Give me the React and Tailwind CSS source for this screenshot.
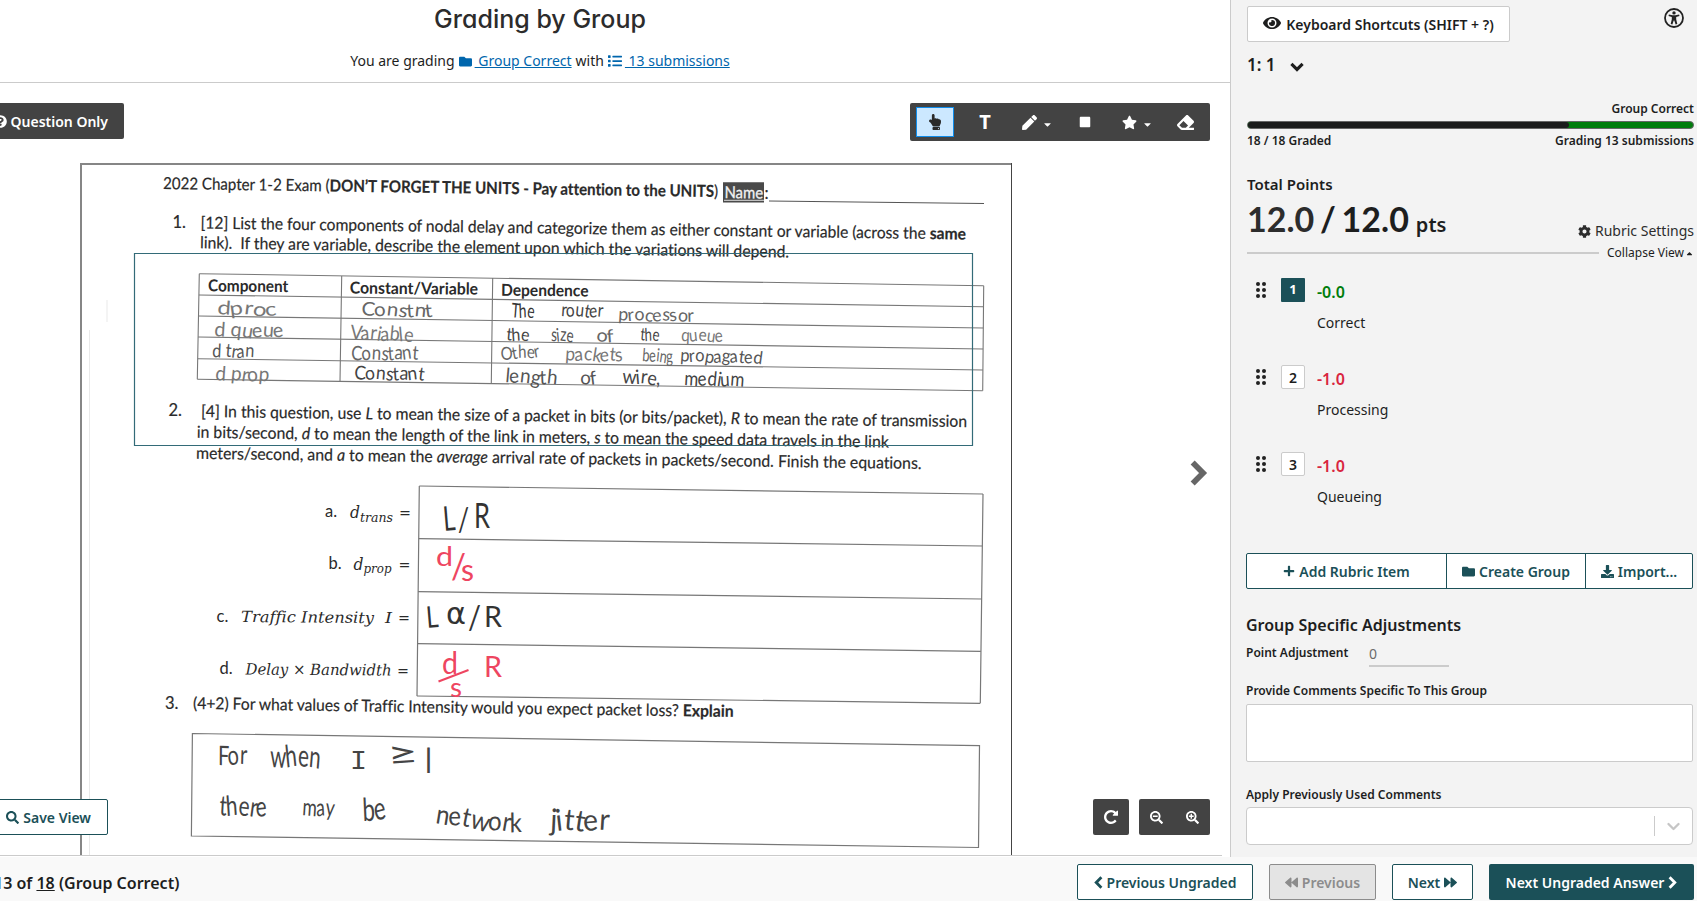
import React from "react";
import {
  FaFolder, FaList, FaQuestionCircle, FaHandPointUp, FaPen, FaCaretDown, FaCaretUp, FaSquare, FaStar,
  FaEraser, FaEye, FaCog, FaPlus, FaDownload,
  FaBackward, FaForward, FaSearch, FaSearchMinus, FaSearchPlus,
} from "react-icons/fa";

/* A line of print on the scanned sheet, running from (x, y) to (x2, y2) along its baseline. */
function Line({ x, y, x2, y2 = y, size = 16.5, children, ...rest }) {
  const len = Math.hypot(x2 - x, y2 - y);
  const angle = (Math.atan2(y2 - y, x2 - x) * 180) / Math.PI;
  return (
    <text
      transform={`translate(${x} ${y}) rotate(${angle})`}
      fontSize={size}
      textLength={len}
      lengthAdjust="spacingAndGlyphs"
      {...rest}
    >
      {children}
    </text>
  );
}

const tableNotes = [
  ["dproc", 217, 314, 277, 315, 19, "#777"],
  ["Constnt", 361, 315, 433, 317, 19, "#666"],
  ["The", 511, 317, 534, 318, 20, "#333"],
  ["router", 561, 316, 603, 317, 19, "#444"],
  ["processor", 618, 320, 694, 321, 18, "#666"],
  ["d queue", 214, 336, 284, 337, 20, "#777"],
  ["Variable", 350, 339, 413, 341, 20, "#777"],
  ["the", 506, 340, 529, 341, 18, "#444"],
  ["size", 551, 341, 573, 341, 19, "#555"],
  ["of", 596, 341, 614, 342, 18, "#666"],
  ["the", 640, 340, 659, 341, 18, "#444"],
  ["queue", 681, 341, 723, 341, 18, "#777"],
  ["d tran", 212, 357, 254, 357, 19, "#555"],
  ["Constant", 351, 360, 418, 359, 20, "#666"],
  ["Other", 501, 360, 540, 356, 18, "#666"],
  ["packets", 565, 360, 623, 361, 19, "#777"],
  ["being", 642, 361, 673, 362, 18, "#666"],
  ["propagated", 680, 361, 762, 363, 18, "#555"],
  ["d prop", 215, 380, 269, 381, 20, "#777"],
  ["Constant", 354, 379, 424, 380, 19, "#444"],
  ["length", 505, 382, 557, 384, 20, "#555"],
  ["of", 580, 384, 597, 384, 19, "#555"],
  ["wire,", 622, 383, 660, 384, 20, "#444"],
  ["medium", 684, 385, 744, 386, 20, "#444"],
];

const answerNotes = [
  ["L", 444, 531, 456, 530, 34, "#333"],
  ["/", 458, 531, 469, 531, 32, "#333"],
  ["R", 474, 528, 490, 528, 34, "#333"],
  ["d", 436, 566, 453, 566, 27, "#ee4560"],
  ["/", 451, 579, 466, 579, 34, "#ee4560"],
  ["s", 461, 581, 474, 581, 31, "#ee4560"],
  ["L", 427, 628, 439, 627, 30, "#333"],
  ["α", 446, 624, 466, 624, 31, "#333", "DejaVu Sans"],
  ["/", 468, 629, 481, 629, 33, "#333"],
  ["R", 484, 627, 502, 627, 29, "#333"],
  ["d", 442, 674, 458, 674, 30, "#ee4560"],
  ["s", 450, 697, 462, 697, 26, "#ee4560"],
  ["R", 484, 677, 502, 677, 28, "#ee4560"],
  ["For", 218, 765, 247, 764, 27, "#444"],
  ["when", 270, 767, 320, 766, 31, "#444"],
  ["I", 350, 769, 367, 769, 28, "#444", "Liberation Mono"],
  ["≥", 388, 765, 419, 763, 31, "#444"],
  ["|", 424, 768, 433, 768, 27, "#444"],
  ["there", 219, 815, 267, 816, 28, "#444"],
  ["may", 302, 815, 334, 816, 24, "#444"],
  ["be", 363, 821, 387, 819, 32, "#444"],
  ["network", 435, 823, 522, 833, 27, "#444"],
  ["jitter", 550, 830, 609, 830, 30, "#444"],
];

const tableRows = [[273.7, 285.7], [295, 306.7], [316, 328], [337, 349], [358.7, 370], [379.3, 390.7]];
const answerRows = [[486, 494], [538.7, 546], [591.7, 599], [643.7, 651.3], [696, 703.3]];

/* Handwritten words: each letter leans and bobs a little. */
const lean = "3 -7 5 9 -5 4 -8 6 -3 7";
const bob = "0 1 -1.5 0.8 0.9 -1.6 1.2 -0.6 0.7 -0.8";

function Notes({ items }) {
  return items.map(([t, x, y, x2, y2, size, color, font], i) => (
    <Line
      key={i}
      x={x} y={y} x2={x2} y2={y2}
      size={size}
      fill={color}
      rotate={t.length > 1 ? lean : undefined}
      dy={t.length > 1 ? bob : undefined}
      fontFamily={font ? `'${font}', sans-serif` : "Lato, sans-serif"}
    >
      {t}
    </Line>
  ));
}

function Sheet() {
  const math = { fontFamily: "'DejaVu Serif', serif", fontStyle: "italic" };
  return (
    <svg className="block h-[772px] w-[1222px] [font-variant-ligatures:none]" viewBox="0 83 1222 772" fontFamily="Lato, sans-serif" fill="#2a2a2a">
      <g stroke="#e9e9e9" strokeWidth="1" fill="none">
        <path d="M89.500 330V855M107 300v22" />
      </g>
      <path d="M81 856V164H1011" fill="none" stroke="#868686" strokeWidth="2" />
      <path d="M1011.500 163V856" stroke="#444" strokeWidth="1" />

      <g stroke="#2a2a2a" strokeWidth="0.200">
        <Line x={163} y={189} x2={718} y2={197}>
          2022 Chapter 1-2 Exam (<tspan fontWeight="700">DON’T FORGET THE UNITS - Pay attention to the UNITS</tspan>)
        </Line>
        <text x="764.500" y="198.500" fontSize="16.500">:</text>
        <text x="172.500" y="228" fontSize="16.500">1.</text>
        <Line x={200.5} y={228.5} x2={966} y2={239.5}>
          [12] List the four components of nodal delay and categorize them as either constant or variable (across the{" "}
          <tspan fontWeight="700">same</tspan>
        </Line>
        <Line x={200} y={248.3} x2={789} y2={257.5}>
          {"link).\u00a0 If they are variable, describe the element upon which the variations will depend."}
        </Line>
        <text x="168.500" y="415.500" fontSize="16.500">2.</text>
        <Line x={201} y={417} x2={967} y2={427}>
          [4] In this question, use <tspan fontStyle="italic">L</tspan> to mean the size of a packet in bits (or bits/packet),{" "}
          <tspan fontStyle="italic">R</tspan> to mean the rate of transmission
        </Line>
        <Line x={196.7} y={437.7} x2={888.7} y2={447.5}>
          in bits/second, <tspan fontStyle="italic">d</tspan> to mean the length of the link in meters,{" "}
          <tspan fontStyle="italic">s</tspan> to mean the speed data travels in the link
        </Line>
        <Line x={196} y={458.8} x2={921.5} y2={469}>
          meters/second, and <tspan fontStyle="italic">a</tspan> to mean the <tspan fontStyle="italic">average</tspan> arrival
          rate of packets in packets/second. Finish the equations.
        </Line>
        <text x="165" y="708.500" fontSize="16.500">3.</text>
        <Line x={193} y={709} x2={733.5} y2={717}>
          (4+2) For what values of Traffic Intensity would you expect packet loss? <tspan fontWeight="700">Explain</tspan>
        </Line>
      </g>
      <path d="M723 182.300H764V202.500H723Z" fill="#4a4a4a" />
      <path d="M724 200.300H764" stroke="#ddd" strokeWidth="1" />
      <Line x={724.5} y={198} x2={763} y2={198.5} fill="#f2f2f2" stroke="#f2f2f2" strokeWidth="0.300">Name</Line>
      <path d="M769 201L984 203.500" stroke="#555" strokeWidth="1.200" />

      <g stroke="#777" strokeWidth="1.100" fill="none">
        {tableRows.map(([a, b], i) => <path key={i} d={`M${199.3 - i * 0.4} ${a}L${983.7 - i * 0.2} ${b}`} />)}
        <path d="M199.300 273.700L197.300 379.300M341.700 276L340 381.500M492.700 278L491.300 383.700M983.700 285.700L982.700 390.700" />
      </g>
      <Line x={208} y={291.3} x2={288.3} y2={292} fontWeight="700">Component</Line>
      <Line x={349.7} y={293.5} x2={478} y2={294.7} fontWeight="700">Constant/Variable</Line>
      <Line x={501} y={295.7} x2={588.5} y2={296.5} fontWeight="700">Dependence</Line>
      <Notes items={tableNotes} />

      <g stroke="#777" strokeWidth="1.200" fill="none">
        {answerRows.map(([a, b], i) => <path key={i} d={`M${419.3 - i * 0.6} ${a}L${983 - i * 0.7} ${b}`} />)}
        <path d="M419.300 486L417 696M983 494L980.300 703.300" />
      </g>
      <text x="325" y="517.300" fontSize="16.500">a.</text>
      <Line {...math} x={350} y={517.8} x2={360} size={16.5}>d</Line>
      <Line {...math} x={360} y={521.5} x2={393} size={12}>trans</Line>
      <Line x={399} y={519} x2={411} size={18}>=</Line>
      <text x="328.500" y="569" fontSize="16.500">b.</text>
      <Line {...math} x={353.5} y={569.5} x2={363.5} size={16.5}>d</Line>
      <Line {...math} x={363.500} y={573} x2={391.5} size={12}>prop</Line>
      <Line x={398.5} y={570.5} x2={410.5} size={18}>=</Line>
      <text x="216.500" y="621.500" fontSize="16.500">c.</text>
      <Line {...math} x={241} y={622} x2={374} y2={623} size={15.5}>Traffic Intensity</Line>
      <Line {...math} x={385} y={622.5} x2={392} size={15.5}>I</Line>
      <Line x={398} y={624} x2={410} size={18}>=</Line>
      <text x="219.500" y="673.500" fontSize="16.500">d.</text>
      <Line {...math} x={245.5} y={674.5} x2={391.5} y2={675.5} size={15.5}>Delay × Bandwidth</Line>
      <Line x={397} y={677} x2={409} size={18}>=</Line>

      <path d="M192.400 733.500L979.500 745.700L978.500 847.500L191.400 836Z" fill="none" stroke="#777" strokeWidth="1.200" />
      <Notes items={answerNotes} />
      <path d="M438.500 681.500L468.500 670" stroke="#ee4560" strokeWidth="2" />

      <path d="M134.500 253.500H972.500V445.500H134.500Z" fill="none" stroke="#336b78" strokeWidth="1.200" />
    </svg>
  );
}

function Chevron({ dir, className }) {
  const turn = { right: "", left: "rotate(180 10 10)", down: "rotate(90 10 10)" }[dir];
  return (
    <svg className={className} viewBox="3 0 14 20" fill="none" stroke="currentColor" strokeWidth="4.400" overflow="visible">
      <path transform={turn} d="M5.500 2L13.500 10L5.500 18" />
    </svg>
  );
}

function Repeat() {
  return (
    <svg className="size-[14px]" viewBox="0 0 1536 1536" fill="currentColor">
      <path d="M1536 128v448q0 26-19 45t-45 19h-448q-42 0-59-40-17-39 14-69l138-138Q969 256 768 256q-104 0-198.500 40.500t-163.500 109.500-109.500 163.500-40.500 198.500 40.500 198.500 109.500 163.500 163.500 109.500 198.500 40.500q119 0 225-52t179-147q7-10 23-12 15 0 25 9l137 138q9 8 9.500 20.500t-7.500 22.500q-109 132-264 204.500t-327 72.500q-156 0-298-61t-245-164-164-245-61-298 61-298 164-245 245-164 298-61q147 0 284.500 55.500t244.500 156.500l130-129q29-31 70-14 39 17 39 59z" />
    </svg>
  );
}

function Accessibility() {
  return (
    <svg className="size-5" viewBox="0 0 20 20" fill="#222">
      <circle cx="10" cy="10" r="9" fill="none" stroke="#222" strokeWidth="1.800" />
      <circle cx="10" cy="4.900" r="1.700" />
      <path d="M4.900 6.500L8.600 7.300H11.400L15.100 6.500L15.500 8L12.200 8.900V11.200L13.300 15.900L11.600 16.400L10.300 12.400H9.700L8.400 16.400L6.700 15.900L7.800 11.200V8.900L4.500 8Z" />
    </svg>
  );
}

function DragDots() {
  return (
    <svg className="mt-1 h-4 w-[10px]" viewBox="0 0 10 16" fill="#222">
      {[2, 8, 14].map((y) => (
        <React.Fragment key={y}>
          <circle cx="2" cy={y} r="2" />
          <circle cx="8" cy={y} r="2" />
        </React.Fragment>
      ))}
    </svg>
  );
}

function Toolbar() {
  return (
    <div className="absolute left-[910px] top-5 flex h-[38px] w-[300px] items-center rounded-[2px] bg-[#434343] text-white">
      <div className="flex w-[50px] justify-center">
        <div className="flex h-[30px] w-[38px] items-center justify-center border border-[#0e8ceb] bg-[#cce8ff] text-[#2a2a2a]">
          <FaHandPointUp className="size-4" />
        </div>
      </div>
      <div className="flex w-[50px] justify-center font-['Noto_Sans',sans-serif] text-[20px] leading-none font-bold">T</div>
      <div className="flex w-[50px] items-center justify-center gap-[5px] pl-[5px]">
        <FaPen className="size-[15px]" />
        <FaCaretDown className="mt-1 size-[11px]" />
      </div>
      <div className="flex w-[50px] justify-center"><FaSquare className="size-[12px]" /></div>
      <div className="flex w-[50px] items-center justify-center gap-[5px] pl-[5px]">
        <FaStar className="size-[15px]" />
        <FaCaretDown className="mt-1 size-[11px]" />
      </div>
      <div className="flex w-[50px] justify-center"><FaEraser className="size-[17px]" /></div>
    </div>
  );
}

const rubric = [
  { n: 1, pts: "-0.0", label: "Correct", on: true },
  { n: 2, pts: "-1.0", label: "Processing" },
  { n: 3, pts: "-1.0", label: "Queueing" },
];

function Sidebar() {
  return (
    <aside className="flex w-[467px] flex-col border-l border-[#cbcbcb] bg-[#f3f3f3] pt-[6px] pr-[3px] pl-4">
      <div className="flex h-9 items-start justify-between pr-[10px]">
        <button className="flex h-9 w-[263px] items-center justify-center gap-[5px] rounded-[2px] border border-[#cbcbcb] bg-white text-[14px] font-semibold">
          <FaEye className="mb-[2px] size-[18px]" />
          <span>Keyboard Shortcuts (SHIFT + ?)</span>
        </button>
        <div className="mt-[2px]"><Accessibility /></div>
      </div>
      <div className="mt-[11px] flex h-6 items-center gap-4 text-[17px] leading-6 font-semibold">
        <span>1: 1</span>
        <Chevron dir="down" className="mt-1 h-[14px] w-[10px]" />
      </div>
      <div className="mt-[22px] h-[22px] text-right text-[12px] leading-5 font-semibold">Group Correct</div>
      <div className="flex h-2 overflow-hidden rounded-full border border-[#666] bg-[#007d0c]">
        <div className="w-[321px] rounded-r-[3px] bg-[#1b1c1c]" />
      </div>
      <div className="mt-[2px] flex h-5 justify-between text-[12px] leading-5 font-semibold">
        <span>18 / 18 Graded</span>
        <span>Grading 13 submissions</span>
      </div>
      <div className="mt-[21px] h-6 text-[15px] leading-6 font-semibold">Total Points</div>
      <div className="flex h-[46px] items-end justify-between">
        <div className="-mb-1 flex items-baseline gap-[7px]">
          <span className="font-['Lato',sans-serif] text-[34px] leading-[42px] font-bold [word-spacing:-2.5px]"><span className="text-[#2c2c2c]">12.0</span> / 12.0</span>
          <span className="text-[20px] leading-[42px] font-semibold">pts</span>
        </div>
        <div className="mb-px flex items-center gap-1 text-[14px] leading-5 text-[#2c2c2c]">
          <FaCog className="size-[13px]" />
          <span>Rubric Settings</span>
        </div>
      </div>
      <div className="mt-[3px] flex h-4 items-center">
        <div className="h-[2px] w-[352px] bg-[#cbcbcb]" />
        <span className="ml-2 text-[12px] leading-4 whitespace-nowrap">Collapse View</span>
        <FaCaretUp className="ml-auto size-[9px]" />
      </div>
      <div className="mt-[17px] flex flex-col pl-[9px]">
        {rubric.map((r) => (
          <div key={r.n} className="flex h-[87px] items-start">
            <DragDots />
            {r.on ? (
              <div className="ml-[15px] flex size-6 items-center justify-center rounded-[1px] bg-[#1b5058] text-[13px] font-bold text-white">{r.n}</div>
            ) : (
              <div className="ml-[15px] flex size-6 items-center justify-center rounded-[2px] border border-[#cbcbcb] bg-white text-[14px] font-semibold">{r.n}</div>
            )}
            <div className="ml-3 flex flex-col">
              <span className={r.on ? "mt-[2px] h-6 text-[16px] leading-6 font-semibold text-[#007d0c]" : "mt-[2px] h-6 text-[16px] leading-6 font-semibold text-[#d9253f]"}>{r.pts}</span>
              <span className="mt-[7px] h-6 text-[14px] leading-6">{r.label}</span>
            </div>
          </div>
        ))}
      </div>
      <div className="mt-[14px] -ml-px mr-px flex h-9 shrink-0 rounded-[2px] border border-[#1b5058] bg-white text-[14px] font-semibold text-[#1b5058]">
        <button className="flex w-[200px] items-center justify-center gap-1 border-r border-[#1b5058]"><FaPlus className="size-3" />Add Rubric Item</button>
        <button className="flex w-[139px] items-center justify-center gap-1 border-r border-[#1b5058]"><FaFolder className="size-[13px]" />Create Group</button>
        <button className="flex flex-1 items-center justify-center gap-1"><FaDownload className="size-[13px]" />Import...</button>
      </div>
      <div className="-ml-px mr-px flex flex-col">
        <div className="mt-6 h-6 text-[16px] leading-6 font-semibold">Group Specific Adjustments</div>
        <div className="mt-[3px] flex h-[27px]">
          <span className="w-[123px] text-[12px] leading-[26px] font-semibold">Point Adjustment</span>
          <div className="w-20 border-b-2 border-[#cbcbcb] pt-[2px] text-[14px] leading-6 text-[#6b6b6b]">0</div>
        </div>
        <div className="mt-[14px] h-5 text-[12px] leading-5 font-semibold">Provide Comments Specific To This Group</div>
        <div className="mt-[3px] h-[58px] rounded-[2px] border border-[#cbcbcb] bg-white" />
        <div className="mt-[23px] h-5 text-[12px] leading-5 font-semibold">Apply Previously Used Comments</div>
        <div className="mt-[2px] flex h-[38px] items-center justify-end rounded-[4px] border border-[#cbcbcb] bg-white">
          <div className="h-5 w-px bg-[#cbcbcb]" />
          <svg className="mx-3 size-[13px]" viewBox="0 0 13 13" fill="none" stroke="#c6c6c6" strokeWidth="2.300" strokeLinecap="round" strokeLinejoin="round">
            <path d="M1.500 4L6.500 9L11.500 4" />
          </svg>
        </div>
      </div>
    </aside>
  );
}

export default function App() {
  return (
    <div className="flex h-[901px] w-[1697px] flex-col overflow-hidden bg-[#f9f9f9] font-['Noto_Sans',sans-serif] text-[#1d1e1e]">
      <div className="flex h-[857px] shrink-0">
        <main className="flex w-[1230px] flex-col bg-white">
          <header className="flex h-[83px] shrink-0 flex-col border-b border-[#cbcbcb]">
            <div className="flex w-[1080px] flex-col items-center">
              <h1 className="mt-[3px] h-8 font-['Inter',sans-serif] text-[25px] leading-8 font-medium text-[#2c2c2c] [font-feature-settings:'cv11']">Grading by Group</h1>
              <p className="mt-4 flex h-5 items-center text-[14px] leading-5">
                <span>You are grading</span>
                <FaFolder className="mr-[3px] ml-1 size-[13px] text-[#0066ad]" />
                <a className="whitespace-pre text-[#0066ad] underline"> Group Correct</a>
                <span className="mx-1">with</span>
                <FaList className="mr-[3px] size-[14px] text-[#0066ad]" />
                <a className="whitespace-pre text-[#0066ad] underline"> 13 submissions</a>
              </p>
            </div>
          </header>
          <div className="relative h-[773px] w-[1222px] border-b border-[#cbcbcb]">
            <Sheet />
            <button className="absolute top-5 left-[-20px] flex h-9 w-[144px] items-center justify-end gap-1 rounded-[2px] bg-[#434343] pr-4 text-[14px] font-semibold text-white">
              <FaQuestionCircle className="size-[13px]" />Question Only
            </button>
            <Toolbar />
            <Chevron dir="right" className="absolute top-[377px] left-[1189px] h-[26px] w-[19px] text-[#666]" />
            <button className="absolute top-[716px] left-[-20px] flex h-9 w-[128px] items-center justify-end gap-1 rounded-[2px] border border-[#1b5058] bg-white pr-4 text-[14px] font-semibold text-[#1b5058]">
              <FaSearch className="size-[13px]" />Save View
            </button>
            <div className="absolute top-[716px] left-[1093px] flex gap-[10px] text-white">
              <div className="flex h-9 w-9 items-center justify-center rounded-[2px] bg-[#434343]"><Repeat /></div>
              <div className="flex h-9 w-[71px] items-center justify-around rounded-[2px] bg-[#434343]">
                <FaSearchMinus className="size-[13px]" />
                <FaSearchPlus className="size-[13px]" />
              </div>
            </div>
          </div>
        </main>
        <Sidebar />
      </div>
      <footer className="flex h-[44px] shrink-0 items-start justify-between pr-[3px]">
        <div className="-ml-[6px] mt-[14px] text-[16px] leading-6 font-semibold">
          13 of <span className="underline">18</span> (Group Correct)
        </div>
        <div className="mt-[7px] flex gap-4 text-[14px] font-semibold text-[#1b5058]">
          <button className="flex h-9 w-[176px] items-center justify-center gap-1 rounded-[2px] border border-[#1b5058] bg-white"><Chevron dir="left" className="h-[13px] w-[9px]" />Previous Ungraded</button>
          <button className="flex h-9 w-[107px] items-center justify-center gap-1 rounded-[2px] border border-[#8c8c8c] bg-[#e4e4e4] text-[#8c8c8c]"><FaBackward className="size-[13px]" />Previous</button>
          <button className="flex h-9 w-[81px] items-center justify-center gap-1 rounded-[2px] border border-[#1b5058] bg-white">Next<FaForward className="size-[13px]" /></button>
          <button className="flex h-9 w-[205px] items-center justify-center gap-1 rounded-[2px] bg-[#1b5058] text-white">Next Ungraded Answer<Chevron dir="right" className="h-[13px] w-[9px]" /></button>
        </div>
      </footer>
    </div>
  );
}
